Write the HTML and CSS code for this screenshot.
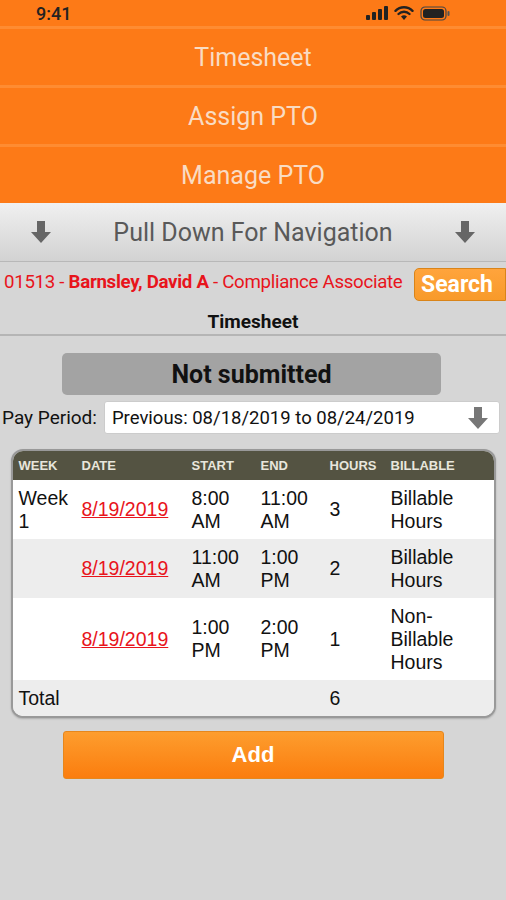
FILE: index.html
```html
<!DOCTYPE html>
<html>
<head>
    <meta charset="utf-8">
    <link rel="stylesheet" href="styles.css">
</head>
<body>
    <div class="top">
        <div class="statusbar">
            <div class="time">9:41</div>
            <div class="sys-icons">
                <svg width="22" height="14" viewBox="0 0 22 14"><rect x="0" y="9" width="4" height="5" rx="1" fill="#222"/><rect x="6" y="6" width="4" height="8" rx="1" fill="#222"/><rect x="12" y="3" width="4" height="11" rx="1" fill="#222"/><rect x="18" y="0" width="4" height="14" rx="1" fill="#222"/></svg>
                <svg width="20" height="15" viewBox="0 0 20 15"><path d="M10 14 L7 10.5 A4.5 4.5 0 0 1 13 10.5 Z" fill="#222"/><path d="M4.5 8 A8 8 0 0 1 15.5 8" stroke="#222" stroke-width="2.4" fill="none" stroke-linecap="round"/><path d="M1.5 4.8 A12 12 0 0 1 18.5 4.8" stroke="#222" stroke-width="2.4" fill="none" stroke-linecap="round"/></svg>
                <svg width="30" height="15" viewBox="0 0 30 15"><rect x="1" y="1" width="25" height="13" rx="4" fill="none" stroke="#444" stroke-width="1.2"/><rect x="3" y="3" width="21" height="9" rx="2.5" fill="#222"/><rect x="27.5" y="5" width="2" height="5" rx="1" fill="#555"/></svg>
            </div>
        </div>
        <div class="menu-item">Timesheet</div>
        <div class="menu-item">Assign PTO</div>
        <div class="menu-item">Manage PTO</div>
    </div>

    <div class="pull-bar">
        <svg class="arrow" width="22" height="24" viewBox="0 0 22 24"><path d="M7 1 H15 V12 H21 L11 23 L1 12 H7 Z" fill="#666"/></svg>
        <span>Pull Down For Navigation</span>
        <svg class="arrow" width="22" height="24" viewBox="0 0 22 24"><path d="M7 1 H15 V12 H21 L11 23 L1 12 H7 Z" fill="#666"/></svg>
    </div>

    <div class="employee-row">
        <div class="employee">01513 - <b>Barnsley, David A</b> - Compliance Associate</div>
        <div class="search-btn">Search</div>
    </div>

    <div class="page-title">Timesheet</div>

    <div class="content">
        <div class="status-box">Not submitted</div>

        <div class="pay-period">
            <div class="pay-label">Pay Period:</div>
            <div class="pay-select">
                <span>Previous: 08/18/2019 to 08/24/2019</span>
                <svg width="22" height="24" viewBox="0 0 22 24"><path d="M7 1 H15 V12 H21 L11 23 L1 12 H7 Z" fill="#777"/></svg>
            </div>
        </div>

        <div class="table">
            <div class="row head">
                <div>WEEK</div><div>DATE</div><div>START</div><div>END</div><div>HOURS</div><div>BILLABLE</div>
            </div>
            <div class="row">
                <div>Week<br>1</div><div class="date">8/19/2019</div><div>8:00<br>AM</div><div>11:00<br>AM</div><div>3</div><div>Billable<br>Hours</div>
            </div>
            <div class="row alt">
                <div></div><div class="date">8/19/2019</div><div>11:00<br>AM</div><div>1:00<br>PM</div><div>2</div><div>Billable<br>Hours</div>
            </div>
            <div class="row tall">
                <div></div><div class="date">8/19/2019</div><div>1:00<br>PM</div><div>2:00<br>PM</div><div>1</div><div>Non-<br>Billable<br>Hours</div>
            </div>
            <div class="row alt total">
                <div>Total</div><div></div><div></div><div></div><div>6</div><div></div>
            </div>
        </div>

        <div class="add-btn">Add</div>
    </div>
</body>
</html>
```

FILE: styles.css
```css
* {
    margin: 0;
    padding: 0;
    box-sizing: border-box;
}

body {
    width: 506px;
    height: 900px;
    background: #d6d6d6;
    font-family: Roboto, 'Liberation Sans', sans-serif;
    overflow: hidden;
}

.top {
    background: #fd7a17;
}

.statusbar {
    height: 26px;
    display: flex;
    align-items: center;
    justify-content: space-between;
    padding: 0 56px 0 36px;
}

.time {
    font-size: 18px;
    font-weight: 500;
    color: #222;
}

.sys-icons {
    display: flex;
    align-items: center;
    gap: 6px;
}

.menu-item {
    height: 59px;
    border-top: 3px solid #fe8c32;
    display: flex;
    align-items: center;
    justify-content: center;
    color: #f9dcc3;
    font-size: 25px;
}

.pull-bar {
    height: 59px;
    background: linear-gradient(#f0f0f0, #d2d2d2);
    border-bottom: 1px solid #b8b8b8;
    display: flex;
    align-items: center;
    justify-content: space-between;
    padding: 0 30px;
    color: #595959;
    font-size: 25px;
}

.employee-row {
    height: 40px;
    display: flex;
    align-items: center;
    justify-content: space-between;
    padding-left: 4px;
}

.employee {
    color: #e8141c;
    font-size: 18.7px;
    letter-spacing: -0.3px;
    white-space: nowrap;
}

.search-btn {
    width: 92px;
    height: 33px;
    background: linear-gradient(#ffa43c, #f89a2a);
    border: 1px solid #d98419;
    border-radius: 5px 0 0 5px;
    color: #fff;
    font-size: 23px;
    font-weight: 700;
    display: flex;
    align-items: center;
    padding-left: 6px;
    margin-top: 4px;
}

.page-title {
    height: 34px;
    border-bottom: 2px solid #b5b5b5;
    text-align: center;
    font-size: 19px;
    font-weight: 700;
    color: #111;
    padding-top: 8px;
}

.content {
    padding-top: 17px;
    display: flex;
    flex-direction: column;
    align-items: center;
}

.status-box {
    width: 379px;
    height: 42px;
    margin-right: 3px;
    background: #a3a3a3;
    border-radius: 5px;
    display: flex;
    align-items: center;
    justify-content: center;
    font-size: 25px;
    font-weight: 700;
    color: #111;
}

.pay-period {
    width: 100%;
    display: flex;
    align-items: center;
    padding: 6px 6px 0 2px;
    gap: 7px;
}

.pay-label {
    font-size: 19px;
    color: #111;
}

.pay-select {
    flex: 1;
    height: 33px;
    background: #fff;
    border: 1px solid #ccc;
    border-radius: 3px;
    display: flex;
    align-items: center;
    justify-content: space-between;
    padding: 0 10px 0 7px;
    font-size: 18.5px;
    color: #111;
}

.table {
    width: 485px;
    margin-top: 15px;
    border: 2px solid #999;
    border-radius: 12px;
    overflow: hidden;
    background: #fff;
    font-family: 'Liberation Sans', Arial, sans-serif;
    box-shadow: 0 1px 2px rgba(0,0,0,0.2);
}

.row {
    display: grid;
    grid-template-columns: 63px 110px 69px 69px 61px 1fr;
    align-items: center;
    height: 59px;
    padding-left: 6px;
    font-size: 19.5px;
    line-height: 23px;
    color: #111;
}

.row.head {
    height: 29px;
    background: #545342;
    color: #e8e6dc;
    font-size: 13px;
    font-weight: 700;
    line-height: 1;
}

.row.alt {
    background: #ededed;
}

.row.tall {
    height: 82px;
}

.row.total {
    height: 36px;
}

.date {
    color: #e8141c;
    text-decoration: underline;
}

.add-btn {
    width: 381px;
    height: 48px;
    margin-top: 13px;
    background: linear-gradient(#fd9d2e, #fb7d0e);
    border: 1px solid #e6871c;
    border-radius: 3px;
    display: flex;
    align-items: center;
    justify-content: center;
    color: #fff;
    font-size: 22px;
    font-weight: 700;
    font-family: 'Liberation Sans', Arial, sans-serif;
}
```
